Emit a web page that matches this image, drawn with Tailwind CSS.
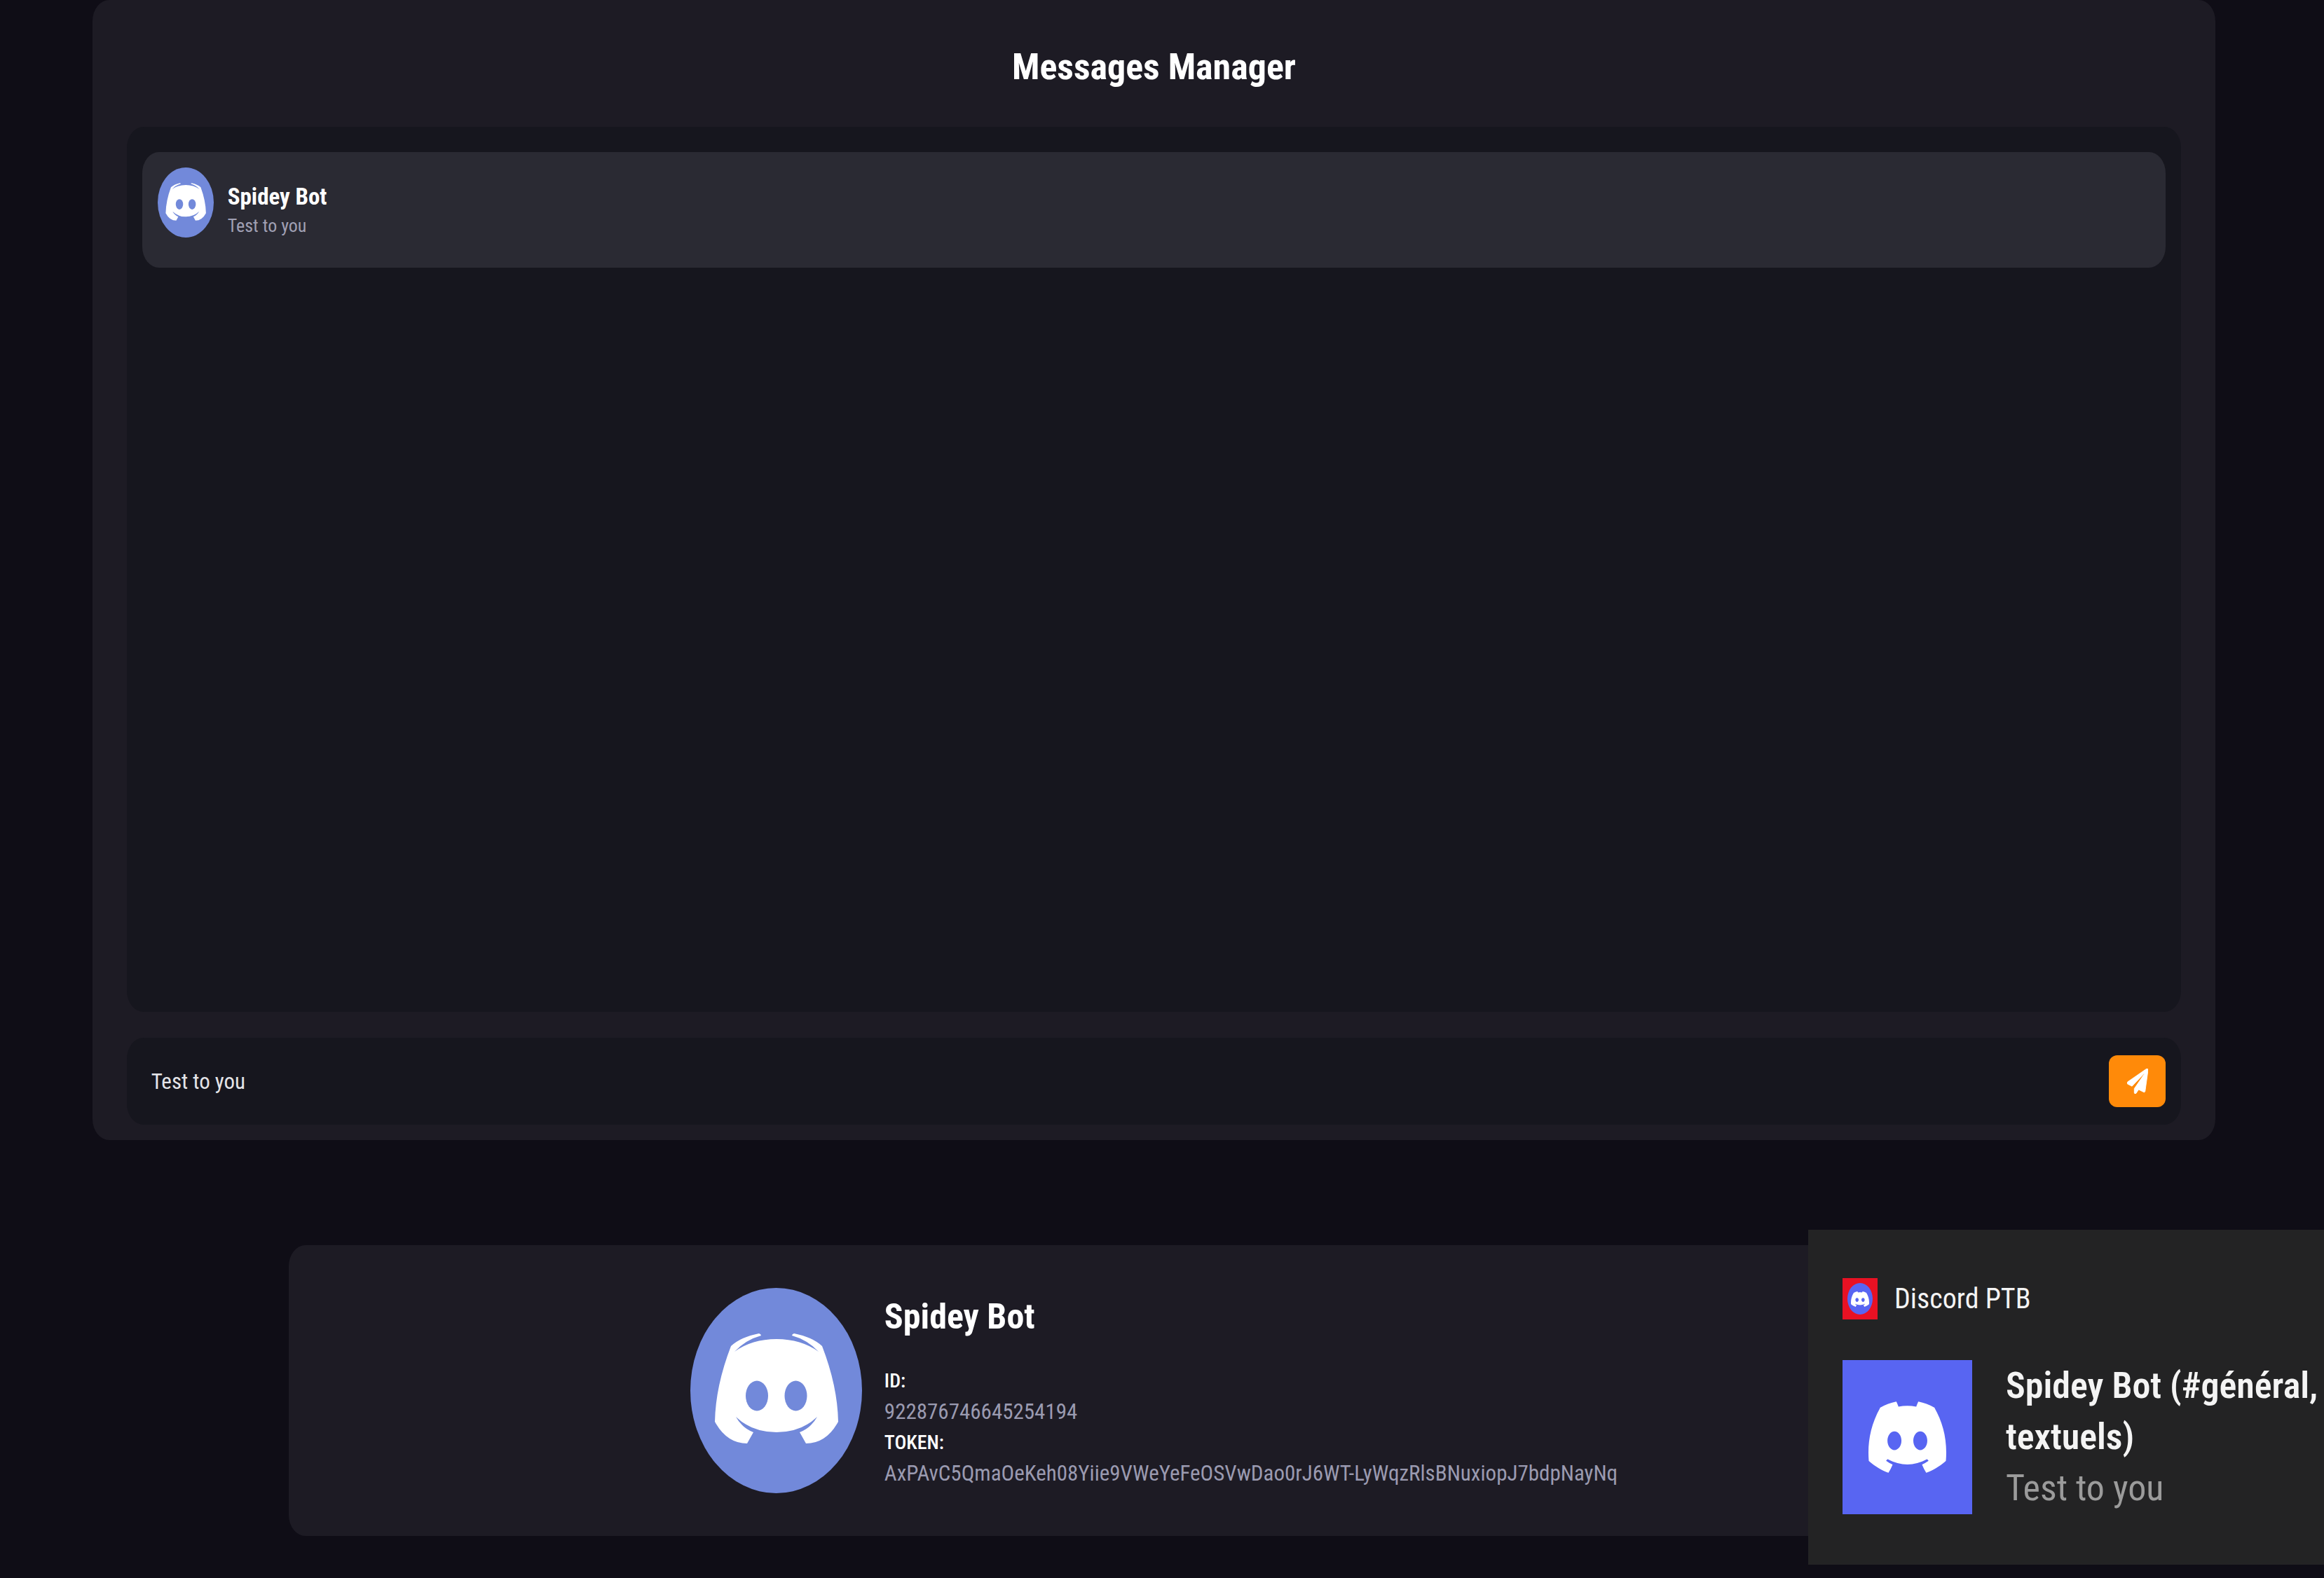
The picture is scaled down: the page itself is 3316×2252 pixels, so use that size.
<!DOCTYPE html>
<html lang="en">
<head>
<meta charset="utf-8">
<meta name="viewport" content="width=device-width, initial-scale=1">
<title>Messages Manager</title>
<script src="https://cdn.jsdelivr.net/npm/@tailwindcss/browser@4"></script>
</head>
<body class="min-h-screen overflow-x-hidden bg-[#0f0d16] font-['Roboto_Condensed','Roboto',sans-serif] text-white">

<svg class="hidden" aria-hidden="true">
  <symbol id="avatar" viewBox="0 0 245 293" preserveAspectRatio="none">
    <ellipse cx="122.5" cy="146.500" rx="122.5" ry="146.500" fill="#7289da"/>
    <path fill="#fff" d="M58 83Q72 70 98 65Q101 66 101 68Q79 74 63 91Q88 73 123 73Q158 73 183 91Q167 74 145 68Q145 66 148 65Q174 70 188 83Q210 140 211 191Q194 222 165 222L156 206Q172 200 181 184Q158 206 123 206Q88 206 65 184Q74 200 90 206L81 222Q52 222 35 191Q36 140 58 83Z"/>
    <ellipse cx="95" cy="154" rx="16" ry="21.500" fill="#7289da"/>
    <ellipse cx="150.500" cy="154" rx="16" ry="21.500" fill="#7289da"/>
  </symbol>
  <symbol id="discord" viewBox="0 2.8 24 18.4" preserveAspectRatio="none">
    <path fill="#fff" d="M20.317 4.3698a19.7913 19.7913 0 00-4.8851-1.5152.0741.0741 0 00-.0785.0371c-.211.3753-.4447.8648-.6083 1.2495-1.8447-.2762-3.68-.2762-5.4868 0-.1636-.3933-.4058-.8742-.6177-1.2495a.077.077 0 00-.0785-.037 19.7363 19.7363 0 00-4.8852 1.515.0699.0699 0 00-.0321.0277C.5334 9.0458-.319 13.5799.0992 18.0578a.0824.0824 0 00.0312.0561c2.0528 1.5076 4.0413 2.4228 5.9929 3.0294a.0777.0777 0 00.0842-.0276c.4616-.6304.8731-1.2952 1.226-1.9942a.076.076 0 00-.0416-.1057c-.6528-.2476-1.2743-.5495-1.8722-.8923a.077.077 0 01-.0076-.1277c.1258-.0943.2517-.1923.3718-.2914a.0743.0743 0 01.0776-.0105c3.9278 1.7933 8.18 1.7933 12.0614 0a.0739.0739 0 01.0785.0095c.1202.099.246.1981.3728.2924a.077.077 0 01-.0066.1276 12.2986 12.2986 0 01-1.873.8914.0766.0766 0 00-.0407.1067c.3604.698.7719 1.3628 1.225 1.9932a.076.076 0 00.0842.0286c1.961-.6067 3.9495-1.5219 6.0023-3.0294a.077.077 0 00.0313-.0552c.5004-5.177-.8382-9.6739-3.5485-13.6604a.061.061 0 00-.0312-.0286zM8.02 15.3312c-1.1825 0-2.1569-1.0857-2.1569-2.419 0-1.3332.9555-2.4189 2.157-2.4189 1.2108 0 2.1757 1.0952 2.1568 2.419 0 1.3332-.9555 2.4189-2.1569 2.4189zm7.9748 0c-1.1825 0-2.1569-1.0857-2.1569-2.419 0-1.3332.9554-2.4189 2.1569-2.4189 1.2108 0 2.1757 1.0952 2.1568 2.419 0 1.3332-.946 2.4189-2.1568 2.4189Z"/>
  </symbol>
</svg>

<main class="mr-[23px] flex flex-col items-center gap-[150px]">

  <section class="flex w-[92%] flex-col rounded-[24px/30px] bg-[#1d1b24] px-[49px] pb-[22px]">
    <h1 class="pt-[60px] pb-[49px] text-center text-[52px] leading-[72px] font-bold">Messages Manager</h1>

    <div class="min-h-[1263px] rounded-[24px/30px] bg-[#16161e] px-[22px] py-9">
      <article class="flex gap-5 rounded-[24px/30px] bg-[#2a2a33] px-[22px] pt-[22px] pb-[41px]">
        <svg class="h-[100px] w-20 shrink-0" role="img" aria-label="Spidey Bot avatar"><use href="#avatar"/></svg>
        <div class="pt-5">
          <h2 class="text-[33px] leading-[44px] font-bold">Spidey Bot</h2>
          <p class="text-[26px] leading-[38px] text-[#a0a0b4]">Test to you</p>
        </div>
      </article>
    </div>

    <form class="mt-[37px] flex items-center gap-6 rounded-[24px/30px] bg-[#16161e] py-[25px] pr-[22px] pl-[35px]">
      <input type="text" value="Test to you" aria-label="Message" class="h-[74px] min-w-0 flex-1 bg-transparent text-[31px] text-[#e4e4e8] outline-none">
      <button type="button" aria-label="Send" class="flex h-[74px] w-[81px] items-center justify-center rounded-xl bg-[#ff8a09]">
        <svg class="h-9 w-[30px]" viewBox="0 0 512 512" preserveAspectRatio="none" aria-hidden="true"><path fill="#fff" stroke="#fff" stroke-width="14" d="M476 3.2L12.5 270.6c-18.1 10.4-15.8 35.6 2.2 43.2L121 358.4l287.3-253.2c5.5-4.9 13.3 2.6 8.6 8.3L176 407v80.5c0 23.6 28.5 32.9 42.5 15.8L282 426l124.6 52.2c14.2 6 30.4-2.9 33-18.2l72-432C515 7.8 493.3-6.8 476 3.2z"/></svg>
      </button>
    </form>
  </section>

  <section class="flex w-3/4 items-center justify-center gap-8 rounded-[24px/30px] bg-[#1d1b24] py-[61px]">
    <svg class="h-[293px] w-[245px] shrink-0" role="img" aria-label="Spidey Bot avatar"><use href="#avatar"/></svg>
    <div>
      <h2 class="mb-9 text-[50px] leading-[68px] font-bold">Spidey Bot</h2>
      <dl class="text-[31px] leading-11">
        <dt class="text-[28px] leading-11 font-medium">ID:</dt>
        <dd class="text-[#9a9ab0]">922876746645254194</dd>
        <dt class="text-[28px] leading-11 font-medium">TOKEN:</dt>
        <dd class="text-[#9a9ab0]">AxPAvC5QmaOeKeh08Yiie9VWeYeFeOSVwDao0rJ6WT-LyWqzRlsBNuxiopJ7bdpNayNq</dd>
      </dl>
    </div>
  </section>
</main>

<!-- Desktop notification -->
<aside class="fixed right-0 bottom-[19px] w-[736px] bg-[#232324] pt-[69px] pb-[72px] pl-[49px]">
  <header class="flex items-center gap-6">
    <span class="flex h-[59px] w-[50px] items-center justify-center bg-[#e81123]">
      <span class="flex h-[45px] w-9 items-center justify-center rounded-[50%] bg-[#5865f2]">
        <svg class="h-[22px] w-[26px]" aria-hidden="true"><use href="#discord"/></svg>
      </span>
    </span>
    <span class="text-[40px] leading-[59px] text-[#f4f4f4]">Discord PTB</span>
  </header>
  <div class="mt-[58px] flex gap-12">
    <div class="flex h-[220px] w-[185px] shrink-0 items-center justify-center bg-[#5865f2]">
      <svg class="h-[102px] w-[111px]" role="img" aria-label="Discord"><use href="#discord"/></svg>
    </div>
    <div class="text-[52px] leading-[73px]">
      <p class="font-semibold text-[#f4f4f4]">Spidey Bot (#général, textuels)</p>
      <p class="text-[#9b9b9b]">Test to you</p>
    </div>
  </div>
</aside>

</body>
</html>
